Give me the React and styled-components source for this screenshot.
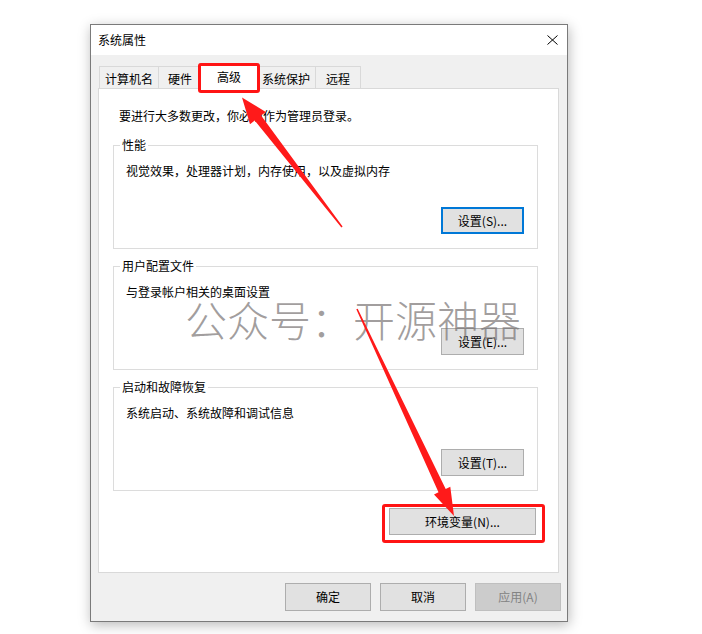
import React from "react";
import styled, { createGlobalStyle, css } from "styled-components";

const Global = createGlobalStyle`
  html, body { margin: 0; padding: 0; background: #fff; }
  body {
    font-family: "Noto Sans CJK SC", "Noto Sans", sans-serif;
    font-size: 12px;
    color: #000;
  }
`;

const Page = styled.div`
  position: relative;
  width: 702px;
  height: 634px;
  box-sizing: border-box;
  padding: 24px 0 0 90px;
  background: #fff;
  overflow: hidden;
`;

const Window = styled.div`
  width: 478px;
  height: 598px;
  box-sizing: border-box;
  border: 1px solid #7a7a7a;
  background: #f0f0f0;
  box-shadow: 1px 3px 12px rgba(0, 0, 0, 0.28);
  display: flex;
  flex-direction: column;
`;

const TitleBar = styled.div`
  height: 30px;
  flex: none;
  background: #fff;
  display: flex;
  align-items: center;
  justify-content: space-between;
  padding: 0 9px 0 7px;
`;

const Title = styled.span`
  font-size: 12px;
  line-height: 16px;
`;

const Body = styled.div`
  flex: 1;
  display: flex;
  flex-direction: column;
  padding: 8px 8px 0 7px;
`;

const TabRow = styled.div`
  display: flex;
  align-items: flex-end;
  height: 25px;
  padding-left: 1px;
`;

const Tab = styled.div`
  box-sizing: border-box;
  width: ${(p) => p.$w}px;
  height: 22px;
  display: flex;
  align-items: center;
  justify-content: center;
  border: 1px solid #d9d9d9;
  border-bottom: none;
  background: #f0f0f0;
  margin-right: -1px;
  padding-top: 2px;
  line-height: 16px;
  white-space: nowrap;
`;

const ActiveTab = styled(Tab)`
  position: relative;
  z-index: 1;
  height: 26px;
  background: #fff;
  margin: 0 -3px -1px -2px;
  padding-top: 0;
`;

const Highlight = styled.div`
  position: absolute;
  left: ${(p) => p.$l}px;
  right: ${(p) => p.$r}px;
  top: ${(p) => p.$t}px;
  bottom: ${(p) => p.$b}px;
  border: 3px solid #ff1414;
  border-radius: 3px;
  pointer-events: none;
`;

const Panel = styled.div`
  box-sizing: border-box;
  height: 485px;
  background: #fff;
  border: 1px solid #d9d9d9;
  padding: 19px 20px 0 14px;
  display: flex;
  flex-direction: column;
`;

const Notice = styled.div`
  padding-left: 6px;
  line-height: 16px;
`;

const Group = styled.fieldset`
  margin: ${(p) => p.$mt}px 0 0;
  padding: 0 13px 14px 0;
  border: 1px solid #dcdcdc;
  min-width: 0;
`;

const Legend = styled.legend`
  margin-left: 6px;
  padding: 0 2px;
  line-height: 16px;
`;

const Desc = styled.div`
  margin-top: 10px;
  padding-left: 12px;
  line-height: 16px;
`;

const ButtonRow = styled.div`
  display: flex;
  justify-content: flex-end;
  margin-top: ${(p) => p.$mt || 0}px;
  padding-right: ${(p) => p.$pr || 0}px;
`;

const Button = styled.button`
  box-sizing: border-box;
  width: ${(p) => p.$w}px;
  height: ${(p) => p.$h || 27}px;
  background: #e1e1e1;
  border: 1px solid #adadad;
  font-family: inherit;
  font-size: 12px;
  line-height: 16px;
  color: #000;
  padding: 0;
  ${(p) =>
    p.$focused &&
    css`
      border: 2px solid #0078d7;
    `}
  &:disabled {
    background: #cccccc;
    border-color: #bfbfbf;
    color: #838383;
  }
`;

const Marked = styled.div`
  position: relative;
`;

const Footer = styled.div`
  display: flex;
  justify-content: flex-end;
  gap: 9px;
  margin: 10px -2px 0 0;
`;

const Watermark = styled.div`
  position: absolute;
  left: 185px;
  top: 298px;
  z-index: 2;
  font-family: "Noto Sans CJK SC", sans-serif;
  font-weight: 300;
  font-size: 42px;
  line-height: 42px;
  color: rgba(120, 115, 115, 0.7);
  white-space: nowrap;
  pointer-events: none;
`;

const Arrows = styled.svg`
  position: absolute;
  left: 0;
  top: 0;
  z-index: 3;
  pointer-events: none;
`;

function CloseIcon() {
  return (
    <svg width="11" height="10" viewBox="0 0 11 10">
      <path d="M0.5 0.5 L10.5 9.5 M10.5 0.5 L0.5 9.5" stroke="#000" strokeWidth="1" fill="none" />
    </svg>
  );
}

function arrow(tip, tail, headLen, headHalf, shaftHalf, tailHalf) {
  const dx = tail[0] - tip[0];
  const dy = tail[1] - tip[1];
  const L = Math.hypot(dx, dy);
  const u = [dx / L, dy / L];
  const p = [u[1], -u[0]];
  const B = [tip[0] + headLen * u[0], tip[1] + headLen * u[1]];
  const pt = (c, k) => `${(c[0] + k * p[0]).toFixed(1)},${(c[1] + k * p[1]).toFixed(1)}`;
  return [
    `${tip[0]},${tip[1]}`,
    pt(B, headHalf),
    pt(B, shaftHalf),
    pt(tail, tailHalf),
    pt(tail, -tailHalf),
    pt(B, -shaftHalf),
    pt(B, -headHalf),
  ].join(" ");
}

const groups = [
  { title: "性能", desc: "视觉效果，处理器计划，内存使用，以及虚拟内存", btn: "设置(S)...", focused: true, mt: 13 },
  { title: "用户配置文件", desc: "与登录帐户相关的桌面设置", btn: "设置(E)...", mt: 9 },
  { title: "启动和故障恢复", desc: "系统启动、系统故障和调试信息", btn: "设置(T)...", mt: 9 },
];

export default function App() {
  return (
    <>
      <Global />
      <Page>
        <Window>
          <TitleBar>
            <Title>系统属性</Title>
            <CloseIcon />
          </TitleBar>
          <Body>
            <TabRow>
              <Tab $w={60}>计算机名</Tab>
              <Tab $w={44}>硬件</Tab>
              <ActiveTab $w={60}>
                高级
                <Highlight $l={-2} $r={-2} $t={-1} $b={-4} />
              </ActiveTab>
              <Tab $w={60}>系统保护</Tab>
              <Tab $w={46}>远程</Tab>
            </TabRow>
            <Panel>
              <Notice>要进行大多数更改，你必须作为管理员登录。</Notice>
              {groups.map((g) => (
                <Group key={g.title} $mt={g.mt}>
                  <Legend>{g.title}</Legend>
                  <Desc>{g.desc}</Desc>
                  <ButtonRow $mt={28}>
                    <Button $w={83} $focused={g.focused}>
                      {g.btn}
                    </Button>
                  </ButtonRow>
                </Group>
              ))}
              <ButtonRow $mt={17} $pr={2}>
                <Marked>
                  <Button $w={147}>环境变量(N)...</Button>
                  <Highlight $l={-7} $r={-9} $t={-4} $b={-8} />
                </Marked>
              </ButtonRow>
            </Panel>
            <Footer>
              <Button $w={86} $h={28}>确定</Button>
              <Button $w={86} $h={28}>取消</Button>
              <Button $w={86} $h={28} disabled>
                应用(A)
              </Button>
            </Footer>
          </Body>
        </Window>
        <Watermark>公众号：开源神器</Watermark>
        <Arrows width="702" height="634" viewBox="0 0 702 634">
          <polygon points={arrow([242, 97.5], [342, 227], 26, 10, 4, 0.8)} fill="#ff1a1a" />
          <polygon points={arrow([454, 516], [357, 309], 28, 9, 4, 0.8)} fill="#ff1a1a" />
        </Arrows>
      </Page>
    </>
  );
}
